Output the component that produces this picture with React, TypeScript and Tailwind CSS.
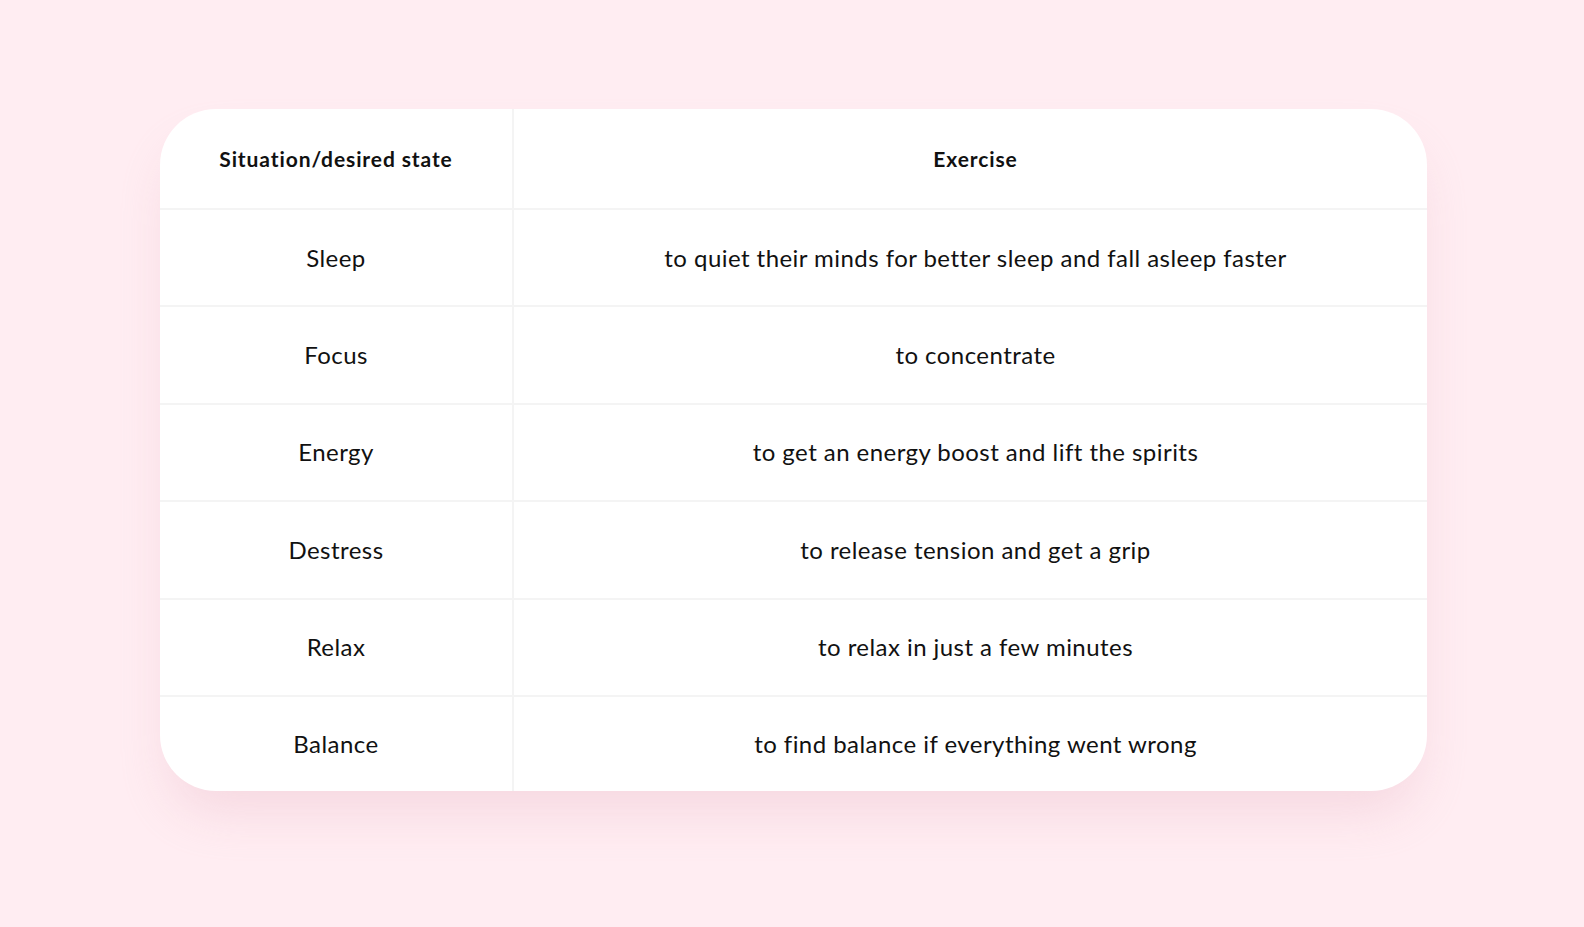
import React from "react";

const rows: [string, string][] = [
  ["Sleep", "to quiet their minds for better sleep and fall asleep faster"],
  ["Focus", "to concentrate"],
  ["Energy", "to get an energy boost and lift the spirits"],
  ["Destress", "to release tension and get a grip"],
  ["Relax", "to relax in just a few minutes"],
  ["Balance", "to find balance if everything went wrong"],
];

export default function App() {
  return (
    <div
      className="w-[1584px] h-[927px] bg-[#ffedf2] pt-[109px] pl-[160px]"
      style={{ fontFamily: "Lato, 'Noto Sans', sans-serif" }}
    >
      <div className="w-[1267px] h-[682px] bg-white rounded-[56px] overflow-hidden shadow-[0_30px_50px_-10px_rgba(235,190,205,0.45)] flex flex-col text-[#111]">
        <div className="flex h-[101px] shrink-0 border-b-2 border-[#f4f4f4]">
          <div className="w-[354px] border-r-2 border-[#f4f4f4] flex items-center justify-center text-[21px] font-bold tracking-[0.9px]">
            Situation/desired state
          </div>
          <div className="flex-1 flex items-center justify-center pl-[10px] text-[21px] font-bold tracking-[0.9px]">
            Exercise
          </div>
        </div>
        {rows.map(([a, b], i) => (
          <div
            key={a}
            className={
              i < rows.length - 1
                ? "flex h-[97.4px] shrink-0 border-b-2 border-[#f4f4f4]"
                : "flex flex-1"
            }
          >
            <div className="w-[354px] border-r-2 border-[#f4f4f4] flex items-center justify-center text-[24px] font-normal tracking-[0.45px]">
              {a}
            </div>
            <div className="flex-1 flex items-center justify-center pl-[10px] text-[24px] font-normal tracking-[0.45px]">
              {b}
            </div>
          </div>
        ))}
      </div>
    </div>
  );
}
